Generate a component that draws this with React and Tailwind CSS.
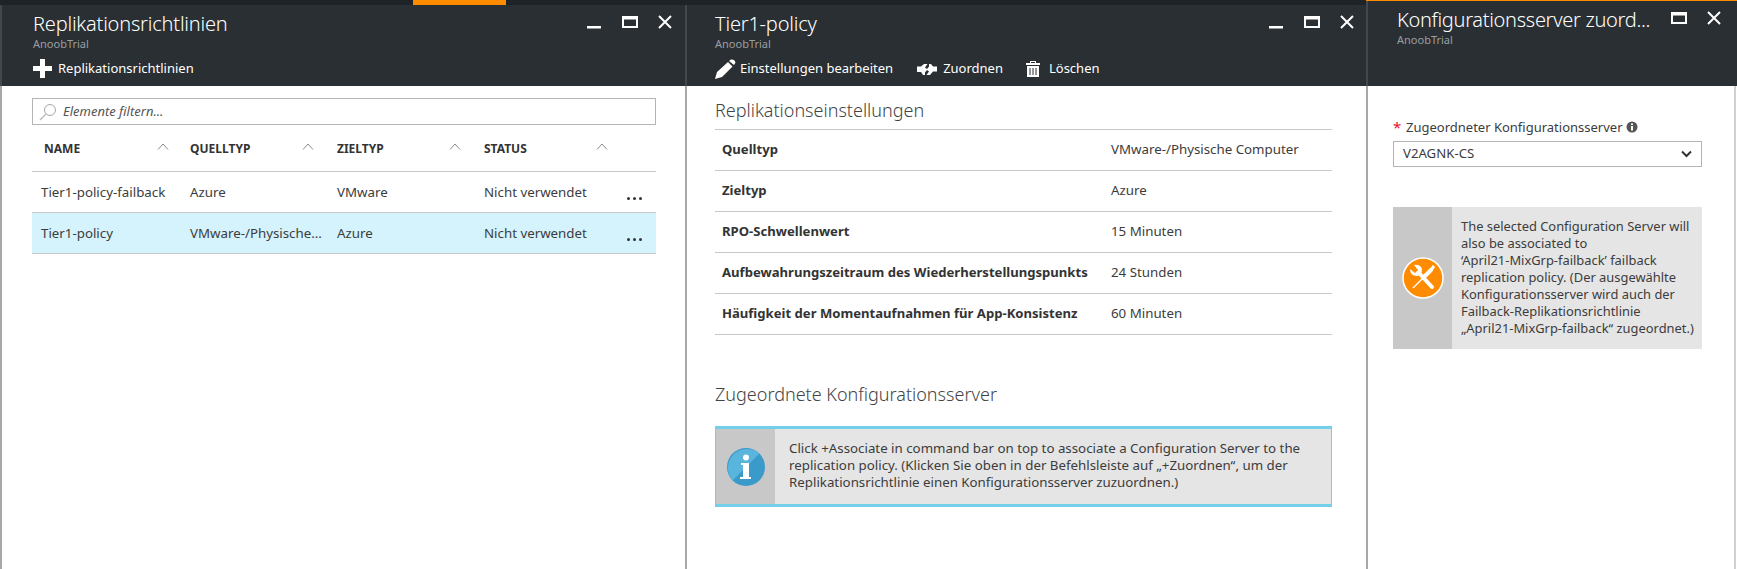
import React from 'react'

const font = "font-['Noto_Sans','Open_Sans',sans-serif]"

const WindowButtons = ({ showMin = true }) => (
  <div className="flex items-start gap-[20px] mt-[10px]">
    {showMin && (
      <svg width="14" height="14" viewBox="0 0 14 14" className="mr-[1px]">
        <rect x="0" y="11" width="14" height="2.5" fill="#fff" />
      </svg>
    )}
    <svg width="16" height="14" viewBox="0 0 16 14">
      <rect x="1" y="2" width="14" height="10" fill="none" stroke="#fff" strokeWidth="2" />
      <rect x="1" y="2" width="14" height="2.5" fill="#fff" />
    </svg>
    <svg width="14" height="14" viewBox="0 0 14 14">
      <path d="M1 1 L13 13 M13 1 L1 13" stroke="#fff" strokeWidth="2" fill="none" />
    </svg>
  </div>
)

const Caret = ({ first }) => (
  <svg width="12" height="7" viewBox="0 0 12 7" className={`absolute top-[18px] ${first ? 'left-[125px]' : 'left-[112px]'}`}>
    <path d="M1 6.5 L6 1 L11 6.5" stroke="#8a8a8a" strokeWidth="1" fill="none" />
  </svg>
)

const Dots = () => (
  <div className="flex gap-[3px] items-center absolute right-[14px] top-[25px]">
    <span className="w-[3px] h-[3px] rounded-full bg-[#333]" />
    <span className="w-[3px] h-[3px] rounded-full bg-[#333]" />
    <span className="w-[3px] h-[3px] rounded-full bg-[#333]" />
  </div>
)

const tableRows = [
  { name: 'Tier1-policy-failback', src: 'Azure', dest: 'VMware', status: 'Nicht verwendet', active: false },
  { name: 'Tier1-policy', src: 'VMware-/Physische...', dest: 'Azure', status: 'Nicht verwendet', active: true },
]

const settings = [
  ['Quelltyp', 'VMware-/Physische Computer'],
  ['Zieltyp', 'Azure'],
  ['RPO-Schwellenwert', '15 Minuten'],
  ['Aufbewahrungszeitraum des Wiederherstellungspunkts', '24 Stunden'],
  ['Häufigkeit der Momentaufnahmen für App-Konsistenz', '60 Minuten'],
]

const Header = ({ title, children, right, height = 'h-[81px]', pl = 'pl-[31px]', titleClass = 'tracking-[-0.2px]' }) => (
  <div className={`${height} bg-[#2a2f33] flex justify-between border-l-2 border-[#43484c] ${pl} shrink-0`}>
    <div className="min-w-0">
      <div className={`text-white text-[20px] ${titleClass} leading-[26px] mt-[6px] font-light whitespace-nowrap`}>{title}</div>
      <div className="text-[#9a9ea2] text-[11px] leading-[14px]">AnoobTrial</div>
      {children}
    </div>
    {right}
  </div>
)

const App = () => {
  return (
    <div className={`${font} w-[1737px] h-[569px] bg-white flex overflow-hidden text-[#3c3c3c]`}>
      {/* Replikationsrichtlinien */}
      <div className="w-[685px] flex flex-col shrink-0">
        <div className="h-[5px] bg-[#1e2327] flex shrink-0">
          <div className="ml-[413px] w-[93px] bg-[#ff8c00]" />
        </div>
        <Header
          title="Replikationsrichtlinien"
          right={<div className="pr-[13px]"><WindowButtons /></div>}
        >
          <div className="flex items-center mt-[8px] text-white text-[13px] gap-[6px]">
            <svg width="19" height="19" viewBox="0 0 19 19">
              <path d="M7 0h5v7h7v5h-7v7H7v-7H0V7h7z" fill="#fff" />
            </svg>
            <span>Replikationsrichtlinien</span>
          </div>
        </Header>
        <div className="flex-1 border-l-2 border-[#a8a8a8] pl-[30px] pr-[29px] pt-[12px]">
          <div className="h-[27px] border border-[#b4b4b4] flex items-center pl-[6px] gap-[6px]">
            <svg width="18" height="18" viewBox="0 0 18 18">
              <circle cx="11" cy="7" r="5.5" fill="none" stroke="#a8a8a8" />
              <path d="M7 11 L1 17" stroke="#bcbcbc" strokeWidth="1.5" />
            </svg>
            <span className="italic text-[13px] text-[#555]">Elemente filtern...</span>
          </div>
          <div className="grid grid-cols-[158px_147px_147px_172px] h-[47px] border-b border-[#c8c8c8] text-[12px] font-bold text-[#333]">
            {['NAME', 'QUELLTYP', 'ZIELTYP', 'STATUS'].map((h, i) => (
              <div key={h} className={`relative pt-[15px] ${i === 0 ? 'pl-[12px]' : ''}`}>
                <span>{h}</span>
                <Caret first={i === 0} />
              </div>
            ))}
          </div>
          {tableRows.map((r) => (
            <div
              key={r.name}
              className={`grid grid-cols-[158px_147px_147px_172px] h-[41px] items-center border-b border-[#c8c8c8] text-[13.3px] relative pt-[2px] ${r.active ? 'bg-[#d5f3fc]' : ''}`}
            >
              <div className="pl-[9px] whitespace-nowrap">{r.name}</div>
              <div className="whitespace-nowrap">{r.src}</div>
              <div>{r.dest}</div>
              <div>{r.status}</div>
              <Dots />
            </div>
          ))}
        </div>
      </div>

      {/* Tier1-policy */}
      <div className="w-[681px] flex flex-col shrink-0">
        <div className="h-[5px] bg-[#1e2327] shrink-0" />
        <Header
          title="Tier1-policy"
          pl="pl-[28px]"
          right={<div className="pr-[12px]"><WindowButtons /></div>}
        >
          <div className="flex items-center mt-[8px] text-white text-[13px]">
            <svg width="21" height="20" viewBox="0 0 21 20" className="mr-[4px]">
              <path d="M0 20 L2 13 L13 3 L17.5 7.5 L7 18 Z M14 2 L16 0.5 Q19.5 0 20.5 3.5 L19 6 Z" fill="#fff" />
            </svg>
            <span>Einstellungen bearbeiten</span>
            <svg width="20" height="11" viewBox="0 0 20 11" className="ml-[24px] mr-[6px]">
              <path d="M0 2.5h4L7 0h3.5L8 3.5 10 5l2-2.5V0h2l2 2.5h4v5h-4L13 11H9.5L12 7.5 10 6 8 8.5V11H6L4 8H0z" fill="#fff" />
            </svg>
            <span>Zuordnen</span>
            <svg width="14" height="16" viewBox="0 0 14 16" className="ml-[23px] mr-[9px]">
              <path d="M0 2h4V0h6v2h4v2H0zM5 1v1h4V1zM1 5h12v11H1z" fill="#fff" fillRule="evenodd" />
              <path d="M4 7v7M7 7v7M10 7v7" stroke="#2a2f33" strokeWidth="1" />
            </svg>
            <span>Löschen</span>
          </div>
        </Header>
        <div className="flex-1 border-l-2 border-[#a8a8a8] pl-[28px] pr-[34px]">
          <div className="text-[18px] leading-[24px] mt-[12px] font-light text-[#444]">Replikationseinstellungen</div>
          <div className="mt-[7px] border-t border-[#c8c8c8]">
            {settings.map(([label, value]) => (
              <div key={label} className="h-[41px] border-b border-[#c8c8c8] flex items-center">
                <div className="w-[396px] pl-[7px] font-bold text-[13.1px] text-[#333] whitespace-nowrap">{label}</div>
                <div className="text-[13.3px] whitespace-nowrap">{value}</div>
              </div>
            ))}
          </div>
          <div className="text-[18px] leading-[24px] mt-[47px] font-light text-[#444]">Zugeordnete Konfigurationsserver</div>
          <div className="mt-[20px] h-[81px] flex border-x border-y-[3px] border-[#74d0ea] bg-[#e5e5e5]">
            <div className="w-[59px] bg-[#c8c8c8] flex items-center justify-center shrink-0">
              <svg width="38" height="38" viewBox="0 0 38 38">
                <circle cx="19" cy="19" r="19" fill="#3a9ac9" />
                <path d="M5.6 32.4 A19 19 0 0 1 32.4 5.6 Z" fill="#5ab5dc" />
                <circle cx="19" cy="9.5" r="3" fill="#fff" />
                <path d="M14 15h8v14h2v2H13v-2h3V17h-2z" fill="#fff" />
              </svg>
            </div>
            <div className="pl-[14px] pr-[14px] pt-[11px] text-[13.3px] leading-[17px]">
              Click +Associate in command bar on top to associate a Configuration Server to the replication policy. (Klicken Sie oben in der Befehlsleiste auf „+Zuordnen“, um der Replikationsrichtlinie einen Konfigurationsserver zuzuordnen.)
            </div>
          </div>
        </div>
      </div>

      {/* Konfigurationsserver zuordnen */}
      <div className="flex-1 flex flex-col min-w-0">
        <div className="h-[1px] bg-[#ff8c00] shrink-0" />
        <Header
          title="Konfigurationsserver zuord..."
          height="h-[85px]"
          pl="pl-[29px]"
          titleClass="tracking-[-0.3px]"
          right={<div className="pr-[16px]"><WindowButtons showMin={false} /></div>}
        />
        <div className="flex-1 border-l-2 border-[#a8a8a8] border-r-2 border-r-[#d0d0d0] mr-[1px] pl-[25px] pt-[32px]">
          <div className="flex items-center text-[13px] leading-[18px]">
            <span className="text-[#e81123] text-[15px] w-[13px]">*</span>
            <span>Zugeordneter Konfigurationsserver</span>
            <svg width="12" height="12" viewBox="0 0 12 12" className="ml-[3px]">
              <circle cx="6" cy="6" r="5.5" fill="#555" />
              <rect x="5" y="5" width="2" height="4.5" fill="#fff" />
              <rect x="5" y="2.5" width="2" height="1.5" fill="#fff" />
            </svg>
          </div>
          <div className="mt-[5px] w-[309px] h-[26px] border border-[#b4b4b4] flex items-center justify-between pl-[9px] pr-[9px] text-[13.2px]">
            <span>V2AGNK-CS</span>
            <svg width="11" height="8" viewBox="0 0 11 8">
              <path d="M1 1.5 L5.5 6 L10 1.5" stroke="#333" strokeWidth="2" fill="none" />
            </svg>
          </div>
          <div className="mt-[40px] w-[309px] h-[142px] flex bg-[#e5e5e5]">
            <div className="w-[59px] bg-[#c8c8c8] flex items-center justify-center shrink-0">
              <svg width="42" height="42" viewBox="0 0 42 42">
                <circle cx="21" cy="21" r="20" fill="#ff8c00" stroke="#fff" strokeWidth="1.5" />
                {/* screwdriver */}
                <path d="M21 21 L29 13" stroke="#fff" strokeWidth="4" strokeLinecap="round" />
                <path d="M29 13 L32 9" stroke="#fff" strokeWidth="3" />
                <path d="M21 21 L11 31" stroke="#fff" strokeWidth="1.5" />
                {/* wrench */}
                <path d="M17 16 L30 30" stroke="#fff" strokeWidth="4" strokeLinecap="round" />
                <path d="M8 12 L13 16 L16 13 L12 8 Q18 7 20 12 Q20 18 15 19 Q8 19 8 12 Z" fill="#fff" />
              </svg>
            </div>
            <div className="pl-[9px] pt-[11px] text-[12.9px] leading-[17px] whitespace-nowrap">
              The selected Configuration Server will<br />
              also be associated to<br />
              ‘April21-MixGrp-failback’ failback<br />
              replication policy. (Der ausgewählte<br />
              Konfigurationsserver wird auch der<br />
              Failback-Replikationsrichtlinie<br />
              „April21-MixGrp-failback“ zugeordnet.)
            </div>
          </div>
        </div>
      </div>
    </div>
  )
}

export default App
